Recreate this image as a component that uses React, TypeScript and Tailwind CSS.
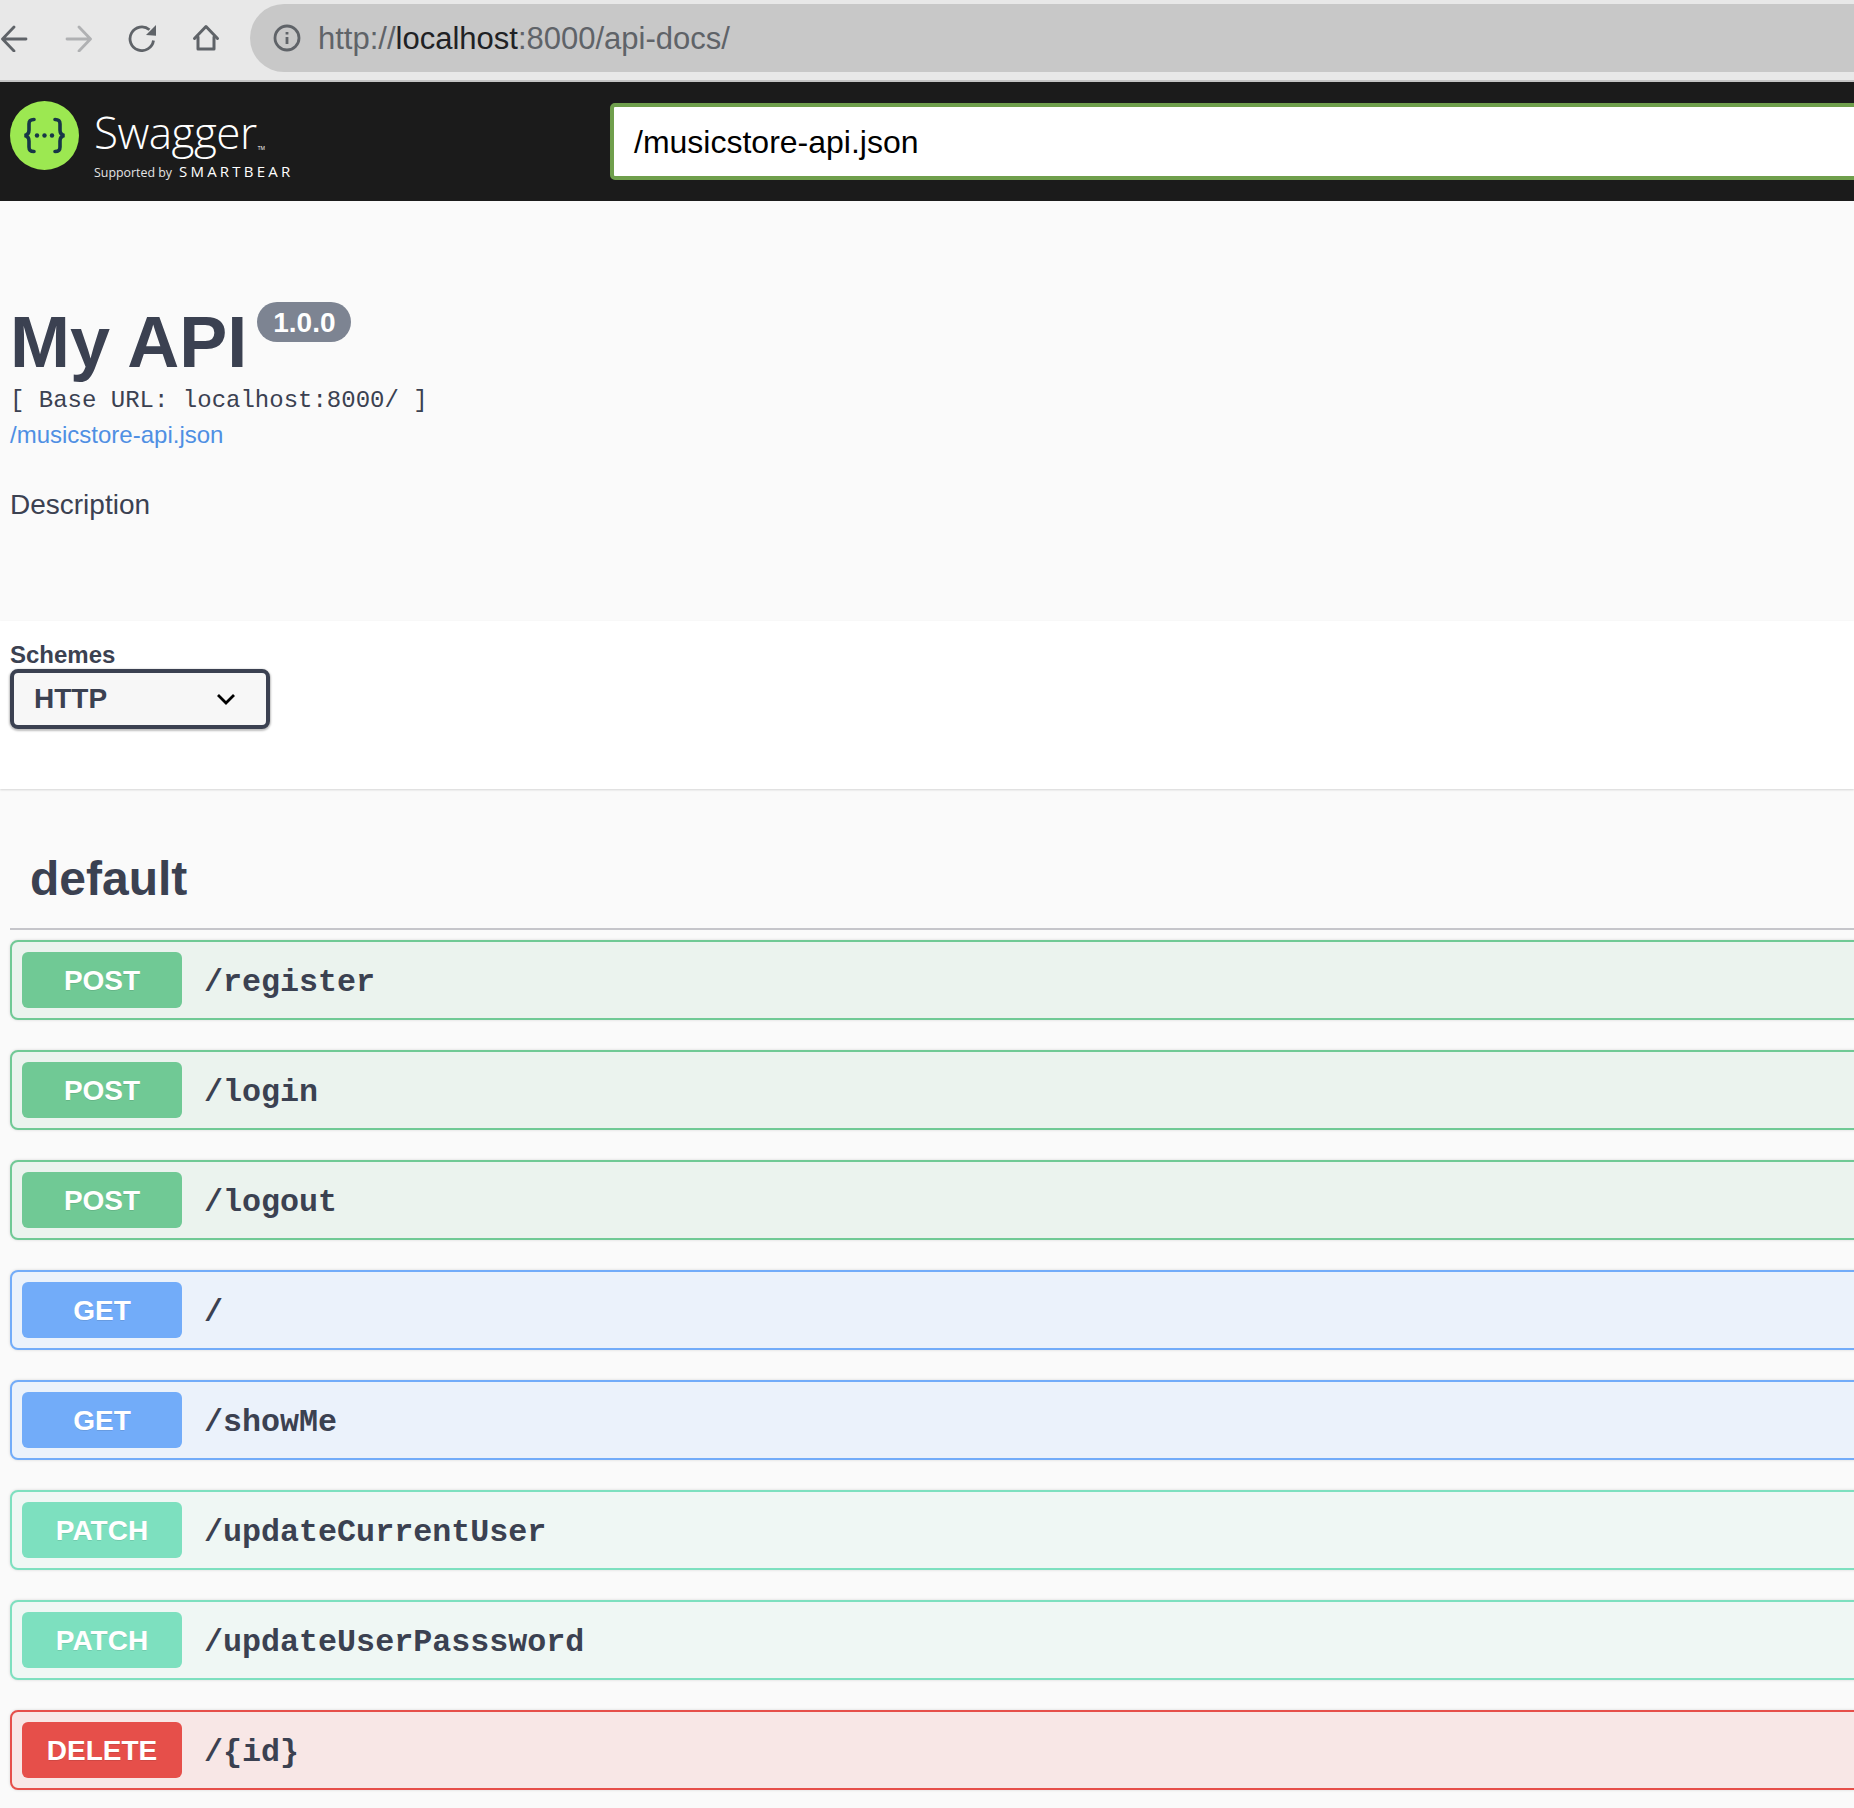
import React from "react";

const sans = "font-['Liberation_Sans',Arial,sans-serif]";

type Row = { method: string; path: string; badge: string; border: string; bg: string };
const POST = { badge: "bg-[#70c995]", border: "border-[#70c995]", bg: "bg-[#ebf3ee]" };
const GET = { badge: "bg-[#72acf9]", border: "border-[#72acf9]", bg: "bg-[#ebf2fb]" };
const PATCH = { badge: "bg-[#7de0bf]", border: "border-[#7de0bf]", bg: "bg-[#eff7f4]" };
const DEL = { badge: "bg-[#e64f4a]", border: "border-[#e64f4a]", bg: "bg-[#f8e7e6]" };
const rows: Row[] = [
  { method: "POST", path: "/register", ...POST },
  { method: "POST", path: "/login", ...POST },
  { method: "POST", path: "/logout", ...POST },
  { method: "GET", path: "/", ...GET },
  { method: "GET", path: "/showMe", ...GET },
  { method: "PATCH", path: "/updateCurrentUser", ...PATCH },
  { method: "PATCH", path: "/updateUserPasssword", ...PATCH },
  { method: "DELETE", path: "/{id}", ...DEL },
];

function Chrome() {
  return (
    <div className="h-[82px] bg-[#e8e8e8] border-b-2 border-[#c4c4c4] flex items-start pt-[4px] overflow-hidden">
      <div className="h-[68px] flex items-center w-[250px] shrink-0">
        <svg width="28" height="28" viewBox="0 0 28 28" fill="none" stroke="#5f6368" strokeWidth="2.8" strokeLinecap="round" strokeLinejoin="round">
          <path d="M26 15H3M14 3 2.500 15 14 27" />
        </svg>
        <svg width="28" height="28" viewBox="0 0 28 28" className="ml-[37px]" fill="none" stroke="#b0b1b3" strokeWidth="2.8" strokeLinecap="round" strokeLinejoin="round">
          <path d="M2 15h23M14 3l11.500 12L14 27" />
        </svg>
        <svg width="30" height="28" viewBox="0 0 30 28" className="ml-[35px]" fill="none" stroke="#5f6368" strokeWidth="2.8">
          <path d="M25.500 16.500A11.800 11.800 0 1 1 21.500 5.800" />
          <path d="M18 11 28 1v10.700z" fill="#5f6368" stroke="none" />
        </svg>
        <svg width="28" height="28" viewBox="0 0 28 28" className="ml-[34px]" fill="none" stroke="#5f6368" strokeWidth="3" strokeLinecap="round" strokeLinejoin="round">
          <path d="M2.500 14.500 14 2.500l11.500 12" />
          <path d="M6 13v12h16V13" />
        </svg>
      </div>
      <div className="flex-1 h-[68px] bg-[#c8c8c8] rounded-l-[34px] flex items-center pl-[23px]">
        <svg width="28" height="28" viewBox="0 0 28 28" fill="none" stroke="#5f6368" strokeWidth="2.800">
          <circle cx="14" cy="14" r="12" />
          <path d="M14 13v7M14 8v2.600" />
        </svg>
        <span className={`ml-[17px] text-[31px] leading-[36px] pt-[1px] text-[#5f6368] ${sans}`}>
          http://<span className="text-[#202124]">localhost</span>:8000/api-docs/
        </span>
      </div>
    </div>
  );
}

function Logo() {
  return (
    <div className="flex items-start w-[600px] shrink-0 pl-[10px]">
      <svg width="69" height="69" viewBox="0 0 69 69" className="shrink-0">
        <circle cx="34.500" cy="34.500" r="34.500" fill="#9ce851" />
        <g fill="none" stroke="#173647" strokeWidth="3.600" strokeLinecap="round">
          <path d="M24 18.500c-4 0-5 1.500-5 4.500v6c0 3-1 5-4.500 5.500 3.500.5 4.500 2.500 4.500 5.500v6c0 3 1 4.500 5 4.500" />
          <path d="M45 18.500c4 0 5 1.500 5 4.500v6c0 3 1 5 4.500 5.500-3.500.5-4.500 2.500-4.500 5.500v6c0 3-1 4.500-5 4.500" />
        </g>
        <g fill="#173647">
          <circle cx="27" cy="34.500" r="2.200" />
          <circle cx="34.500" cy="34.500" r="2.200" />
          <circle cx="42" cy="34.500" r="2.200" />
        </g>
      </svg>
      <div className="ml-[15px] font-['Open_Sans',sans-serif] text-white">
        <div className="flex items-start h-[61px] pt-[5px]">
          <span className="text-[44px] leading-[52px] font-light tracking-[-0.5px]">Swagger</span>
          <span className="text-[5px] leading-[5px] ml-[1px] mt-[40px]">TM</span>
        </div>
        <div className="flex items-baseline">
          <span className="text-[12.400px] leading-[18px] text-[#e4e4e4]">Supported by</span>
          <span className="ml-[7px] text-[15px] leading-[18px] tracking-[3.200px] font-normal">SMARTBEAR</span>
        </div>
      </div>
    </div>
  );
}

function Header() {
  return (
    <div className="h-[119px] bg-[#1b1b1b] flex items-start pt-[19px]">
      <Logo />
      <div className="flex-1 -mr-[20px] ml-[10px] mt-[2px] h-[77px] bg-white border-[4px] border-[#6f9f4c] rounded-[5px] flex items-center pl-[20px]">
        <span className={`text-[32px] leading-[40px] text-black ${sans}`}>/musicstore-api.json</span>
      </div>
    </div>
  );
}

function Info() {
  return (
    <div className={`h-[420px] bg-[#fafafa] pl-[10px] pt-[99px] text-[#3b4151] ${sans}`}>
      <div className="flex items-start h-[84px]">
        <h1 className="text-[72px] leading-[84px] font-bold">My API</h1>
        <span className="ml-[10px] mt-[2px] h-[40px] w-[94px] rounded-[20px] bg-[#7d8492] text-white text-[28px] leading-[42px] font-bold text-center">1.0.0</span>
      </div>
      <div className="font-['Liberation_Mono',monospace] text-[24px] leading-[28px] mt-[3px]">[ Base URL: localhost:8000/ ]</div>
      <div className="text-[24px] leading-[32px] mt-[4px] text-[#4f8fe3]">/musicstore-api.json</div>
      <div className="text-[28px] leading-[36px] mt-[36px]">Description</div>
    </div>
  );
}

function Schemes() {
  return (
    <div className={`h-[168px] bg-white pl-[10px] pt-[20px] shadow-[0_1px_2px_rgba(0,0,0,0.15)] relative text-[#3b4151] ${sans}`}>
      <div className="text-[24px] leading-[28px] font-bold">Schemes</div>
      <div className="w-[260px] h-[60px] border-[4px] border-[#3b4151] rounded-[8px] bg-[#f7f7f7] shadow-[0_1px_2px_1px_rgba(0,0,0,0.25)] flex items-center justify-between pl-[20px] pr-[30px]">
        <span className="text-[28px] leading-[32px] font-bold">HTTP</span>
        <svg width="20" height="12" viewBox="0 0 20 12" fill="none" stroke="#000" strokeWidth="2.800">
          <path d="M2 2l8 8 8-8" />
        </svg>
      </div>
    </div>
  );
}

function Ops() {
  return (
    <div className={`h-[1019px] bg-[#fafafa] pl-[10px] text-[#3b4151] ${sans}`}>
      <div className="h-[141px] border-b-2 border-[#c5c5ca] pl-[20px] pt-[62px] -mr-[20px]">
        <h2 className="text-[48px] leading-[56px] font-bold">default</h2>
      </div>
      <div className="flex flex-col gap-[30px] mt-[10px] -mr-[20px]">
        {rows.map((r, i) => (
          <div key={i} className={`h-[80px] border-2 rounded-[8px] shadow-[0_0_3px_rgba(0,0,0,0.15)] ${r.border} ${r.bg} flex items-center pl-[10px]`}>
            <div className={`w-[160px] h-[56px] rounded-[6px] ${r.badge} text-white text-[28px] leading-[58px] font-bold text-center [text-shadow:0_1px_0_rgba(0,0,0,0.1)]`}>{r.method}</div>
            <div className="ml-[22px] mt-[6px] font-['Liberation_Mono',monospace] text-[31.700px] leading-[40px] font-bold">{r.path}</div>
          </div>
        ))}
      </div>
    </div>
  );
}

export default function App() {
  return (
    <div className="w-[1854px] h-[1808px] overflow-hidden bg-[#fafafa]">
      <Chrome />
      <Header />
      <Info />
      <Schemes />
      <Ops />
    </div>
  );
}
